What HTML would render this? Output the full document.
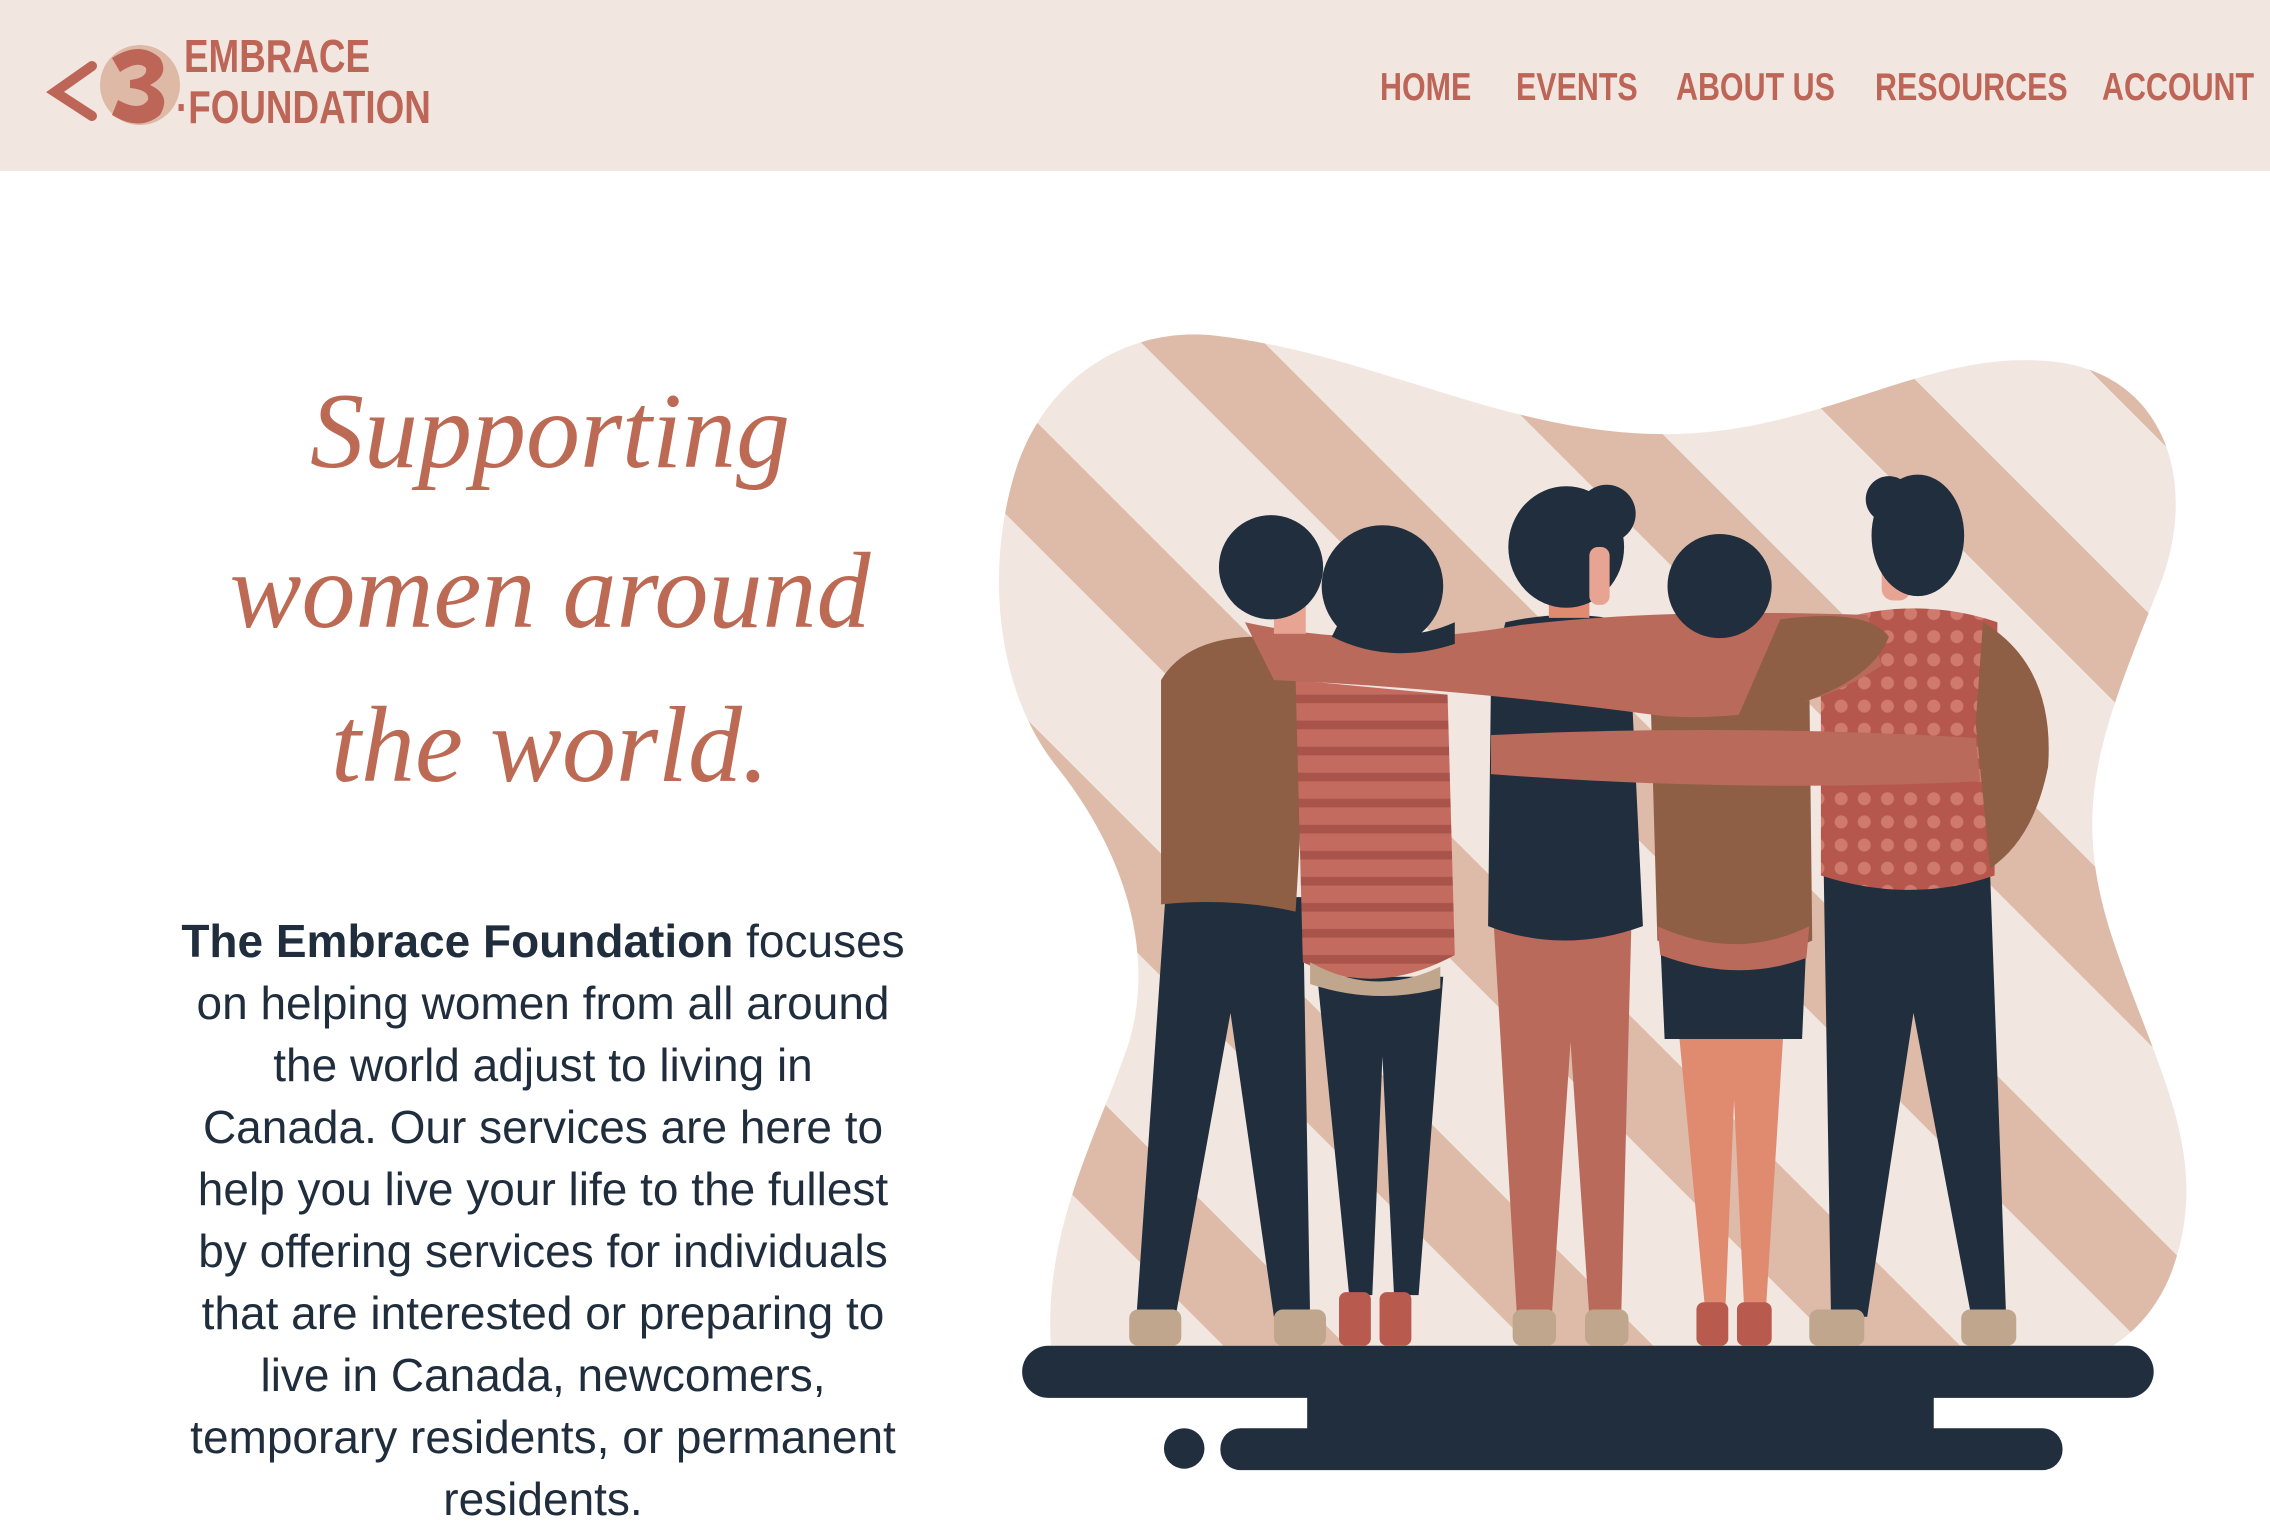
<!DOCTYPE html>
<html><head><meta charset="utf-8"><style>
*{margin:0;padding:0;box-sizing:border-box}
body{width:2270px;height:1502px;overflow:hidden;background:#fff;position:relative;font-family:"Liberation Sans",sans-serif}
.hdr{position:absolute;left:0;top:0;width:2270px;height:171px;background:#f2e6e0}
.brand{position:absolute;left:184px;font-family:"Liberation Sans",sans-serif;font-weight:bold;color:#bd6657;font-size:46px;line-height:1;transform:scaleX(0.8);transform-origin:left top;white-space:nowrap}
.nav{position:absolute;top:68px;font-family:"Liberation Sans",sans-serif;font-weight:bold;color:#bd6657;font-size:39px;line-height:1;white-space:nowrap;transform:scaleX(0.78);transform-origin:left top}
.h{position:absolute;left:0;width:1100px;text-align:center;font-family:"Liberation Serif",serif;font-style:italic;color:#bd6a55;font-size:108px;line-height:1;white-space:nowrap}
.p{position:absolute;left:143px;width:800px;text-align:center;font-family:"Liberation Sans",sans-serif;color:#1f2d3d;font-size:46px;line-height:62px;white-space:nowrap}
</style></head><body>
<div class="hdr"></div>
<svg style="position:absolute;left:0;top:0" width="200" height="171" viewBox="0 0 200 171">
<path d="M92 66 L55 92 L92 116" fill="none" stroke="#bd6657" stroke-width="10" stroke-linecap="round"/>
<circle cx="140" cy="85" r="40" fill="#ddb9a6"/>
<path d="M112 58 Q140 40 160 58 Q170 75 150 85 Q172 95 160 115 Q140 132 112 115 L118 100 Q140 112 148 100 Q150 90 130 88 L130 80 Q148 78 146 68 Q138 60 120 72 Z" fill="#bd6657"/>
</svg>
<div class="brand" style="top:33px">EMBRACE</div>
<div class="brand" style="top:84px;left:176px">·FOUNDATION</div>
<div class="nav" style="left:1380px">HOME</div>
<div class="nav" style="left:1516px">EVENTS</div>
<div class="nav" style="left:1676px">ABOUT US</div>
<div class="nav" style="left:1875px">RESOURCES</div>
<div class="nav" style="left:2102px">ACCOUNT</div>

<div class="h" style="top:378px">Supporting</div>
<div class="h" style="top:538px">women around</div>
<div class="h" style="top:692px">the world.</div>

<div class="p" style="top:910px"><span style="font-weight:bold">The Embrace Foundation</span> focuses<br>on helping women from all around<br>the world adjust to living in<br>Canada. Our services are here to<br>help you live your life to the fullest<br>by offering services for individuals<br>that are interested or preparing to<br>live in Canada, newcomers,<br>temporary residents, or permanent<br>residents.</div>

<svg style="position:absolute;left:0;top:0" width="2270" height="1502" viewBox="0 0 1568 1038">
<defs>
<clipPath id="blob"><path d="M726,930 C720,850 760,780 780,720 C800,650 770,580 730,530 C690,480 680,400 700,330 C720,260 780,225 840,232 C950,245 1040,300 1150,300 C1260,300 1330,240 1420,250 C1500,260 1520,340 1490,410 C1450,510 1430,560 1460,650 C1490,740 1530,800 1500,880 C1490,905 1475,920 1460,930 Z"/></clipPath>
<pattern id="st" width="150" height="150" patternUnits="userSpaceOnUse" patternTransform="rotate(45)"><rect width="150" height="150" fill="#f2e6e0"/><rect width="150" height="60" fill="#ddbba8"/></pattern>
<pattern id="dots" width="16" height="16" patternUnits="userSpaceOnUse"><rect width="16" height="16" fill="#b5574c"/><circle cx="8" cy="8" r="4.5" fill="#cf7a6c"/></pattern>
<pattern id="str" width="20" height="18" patternUnits="userSpaceOnUse"><rect width="20" height="18" fill="#c46b5f"/><rect y="12" width="20" height="6" fill="#a9544b"/></pattern>
</defs>
<g clip-path="url(#blob)"><rect x="680" y="220" width="860" height="720" fill="url(#st)"/></g>
<rect x="706" y="930" width="782" height="36" rx="18" fill="#202e3d"/>
<rect x="903" y="950" width="433" height="50" fill="#202e3d"/>
<rect x="843" y="987" width="582" height="29" rx="14" fill="#202e3d"/>
<circle cx="818" cy="1001" r="14" fill="#202e3d"/>
<path d="M805 620 L900 620 L905 910 L880 910 L850 700 L812 910 L785 910 Z" fill="#202e3d"/>
<path d="M910 675 L997 675 L980 895 L963 895 L955 730 L948 895 L932 895 Z" fill="#202e3d"/>
<path d="M1032 640 L1127 640 L1120 910 L1098 910 L1085 720 L1072 910 L1048 910 Z" fill="#b96a5b"/>
<path d="M1160 715 L1232 715 L1220 905 L1205 905 L1198 760 L1192 905 L1178 905 Z" fill="#e08a70"/>
<path d="M1147 650 L1248 650 L1245 718 L1150 718 Z" fill="#202e3d"/>
<path d="M1260 605 L1375 605 L1386 910 L1362 910 L1322 700 L1290 910 L1265 910 Z" fill="#202e3d"/>
<g fill="#c0a68c"><rect x="780" y="905" width="36" height="25" rx="6"/><rect x="880" y="905" width="36" height="25" rx="6"/><rect x="1045" y="905" width="30" height="25" rx="6"/><rect x="1095" y="905" width="30" height="25" rx="6"/><rect x="1250" y="905" width="38" height="25" rx="6"/><rect x="1355" y="905" width="38" height="25" rx="6"/></g>
<g fill="#b85a4e"><rect x="925" y="893" width="22" height="37" rx="5"/><rect x="953" y="893" width="22" height="37" rx="5"/><rect x="1172" y="900" width="22" height="30" rx="5"/><rect x="1200" y="900" width="24" height="30" rx="5"/></g>
<path d="M802 470 Q820 440 870 440 L905 460 L895 630 Q850 620 802 625 Z" fill="#8e5e45"/>
<path d="M895 470 L1000 480 L1005 660 Q950 690 900 665 Z" fill="url(#str)"/>
<path d="M905 665 Q950 690 995 668 L995 683 Q950 695 905 680 Z" fill="#c0a68c"/>
<path d="M1040 430 Q1085 420 1125 430 L1135 640 Q1080 660 1028 640 L1030 470 Z" fill="#202e3d"/>
<path d="M1140 470 L1250 470 L1252 650 Q1200 675 1145 650 Z" fill="#8e5e45"/>
<path d="M1145 640 Q1200 665 1250 640 L1248 662 Q1200 680 1147 660 Z" fill="#b96a5b"/>
<path d="M1258 432 Q1320 410 1380 430 L1378 605 Q1320 625 1258 605 Z" fill="url(#dots)"/>
<path d="M1370 430 Q1420 460 1415 530 Q1405 580 1375 600 L1365 500 Z" fill="#8e5e45"/>
<path d="M860 430 Q950 450 1050 432 Q1150 420 1290 425 L1300 460 Q1240 500 1150 495 Q1000 475 880 470 Z" fill="#b96a5b"/>
<path d="M1030 508 Q1200 500 1365 510 L1368 540 Q1200 548 1030 535 Z" fill="#b96a5b"/>
<path d="M1230 428 Q1290 420 1305 440 Q1290 480 1200 497 Z" fill="#8e5e45"/>
<rect x="880" y="400" width="22" height="38" fill="#e8a493"/>
<circle cx="878" cy="392" r="36" fill="#202e3d"/>
<circle cx="955" cy="405" r="42" fill="#202e3d"/>
<path d="M930 420 Q960 450 1005 430 L1005 445 Q960 460 920 440 Z" fill="#202e3d"/>
<rect x="1070" y="405" width="28" height="22" fill="#e08a70"/>
<ellipse cx="1082" cy="378" rx="40" ry="42" fill="#202e3d"/>
<circle cx="1110" cy="355" r="20" fill="#202e3d"/>
<rect x="1098" y="378" width="14" height="40" rx="6" fill="#e8a493"/>
<circle cx="1188" cy="405" r="36" fill="#202e3d"/>
<rect x="1300" y="375" width="20" height="40" rx="8" fill="#e8a493"/>
<ellipse cx="1325" cy="370" rx="32" ry="42" fill="#202e3d"/>
<circle cx="1305" cy="345" r="16" fill="#202e3d"/>
</svg>
</body></html>
